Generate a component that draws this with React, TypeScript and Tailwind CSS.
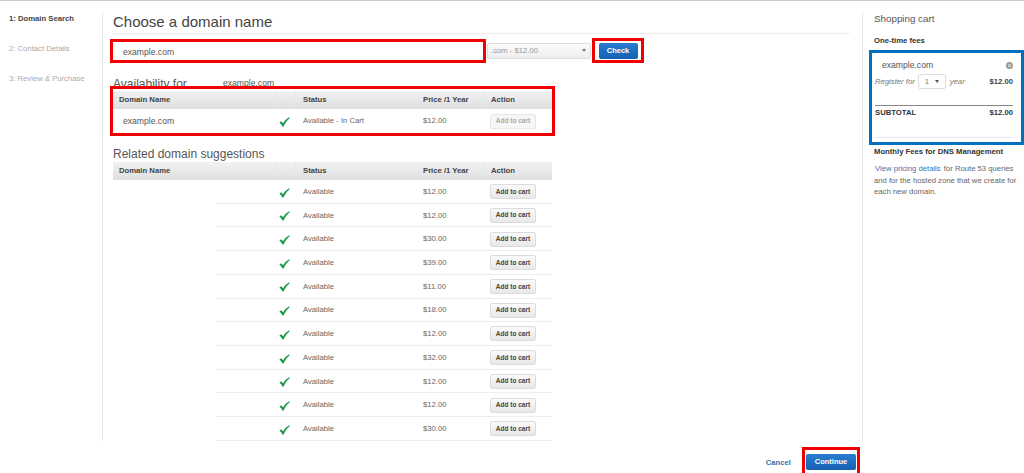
const rows = ["$12.00","$12.00","$30.00","$39.00","$11.00","$18.00","$12.00","$32.00","$12.00","$12.00","$30.00"];

function Check() {
  return (
    <svg width="11" height="10" viewBox="0 0 11 10" className="block">
      <path d="M0.4 5.6 L2.2 4.2 L4 6.2 C5.6 3.8 7.6 1.8 10.2 0.3 L10.8 1.1 C8.4 3.2 6.4 5.8 4.6 9.6 L3.4 9.6 C2.6 8 1.6 6.6 0.4 5.6 Z" fill="#1c9a4a" />
    </svg>
  );
}

function Head() {
  return (
    <div className="flex h-[18px] items-center bg-gradient-to-b from-[#f2f2f2] to-[#dfdfdf] pb-[1px] text-[7.7px] font-bold text-[#444]">
      <div className="w-[162px] pl-[6px]">Domain Name</div>
      <div className="h-full w-[21px] border-x border-[#e9e9e9]" />
      <div className="w-[121px] pl-[7px]">Status</div>
      <div className="flex h-full w-[68px] items-center border-r border-[#e9e9e9] pl-[6px]">Price /1 Year</div>
      <div className="pl-[6px]">Action</div>
    </div>
  );
}

function Row({ price, name, status, disabled, h }: { price: string; name?: string; status: string; disabled?: boolean; h: string }) {
  return (
    <div className={`flex items-center pt-[0.5px] text-[7.7px] text-[#666] ${h}`}>
      <div className="w-[162px] pl-[10px] text-[8.6px] text-[#555]">{name}</div>
      <div className="flex w-[21px] justify-center pr-[2px] pt-[2px]"><Check /></div>
      <div className="w-[121px] pl-[7px]">{status}</div>
      <div className="w-[68px] pl-[6px]">{price}</div>
      <button className={`ml-[5px] h-[15px] w-[46px] rounded-[2px] border text-[6.5px] font-bold ${disabled ? "border-[#e6e6e6] bg-[#f6f6f6] text-[#aaa]" : "border-[#dcdcdc] bg-gradient-to-b from-[#fafafa] to-[#e8e8e8] text-[#444]"}`}>Add to cart</button>
    </div>
  );
}

export default function App() {
  return (
    <div className="flex h-[473px] w-[1024px] flex-col overflow-hidden border-t border-[#ccc] bg-white font-['Liberation_Sans',Arial,sans-serif]">
      <div className="mt-[12px] flex h-[428px]">
        <aside className="flex w-[103px] flex-col gap-[18px] border-r border-[#e4e4e4] pl-[9px] text-[7.7px] leading-[12px] text-[#aaa]">
          <div className="font-bold text-[#444]">1: Domain Search</div>
          <div>2: Contact Details</div>
          <div>3: Review &amp; Purchase</div>
        </aside>

        <main className="w-[760px] border-r border-[#e4e4e4] pl-[10px]">
          <h1 className="mr-[12px] h-[21px] border-b border-[#eee] text-[15px] leading-[18px] text-[#444]">Choose a domain name</h1>
          <div className="-ml-[3px] mt-[4px] flex items-center">
            <div className="flex h-[24px] w-[376px] items-center border-[3px] border-[#f00000] pl-[10px] pt-[4px] text-[8.6px] text-[#555]">example.com</div>
            <div className="ml-[1px] flex h-[16px] w-[104px] items-center justify-between rounded-[2px] border border-[#ddd] bg-gradient-to-b from-[#fbfbfb] to-[#eee] pl-[3px] pr-[4px] text-[7.7px] text-[#999]">
              <span>.com - $12.00</span>
              <span className="h-0 w-0 border-x-[2.5px] border-t-[3px] border-x-transparent border-t-[#777]" />
            </div>
            <div className="ml-[1px] flex h-[25px] w-[52px] items-center justify-center border-[3px] border-[#f00000]">
              <button className="h-[16px] w-[39px] rounded-[2px] bg-gradient-to-b from-[#2a7cd0] to-[#1660b0] text-[7.5px] font-bold text-white">Check</button>
            </div>
          </div>

          <div className="mt-[13px] flex h-[10px] items-start pt-[2px] leading-none text-[#555]">
            <span className="w-[110px] text-[12px]">Availability for</span>
            <span className="mt-[1px] text-[8.6px]">example.com</span>
          </div>
          <div className="relative -ml-[3px] w-[445px] border-[3px] border-[#f00000] bg-white pt-[2px]">
            <Head />
            <Row name="example.com" status="Available - In Cart" price="$12.00" disabled h="h-[24px]" />
          </div>

          <h2 className="mt-[10px] h-[16px] text-[12px] leading-[16px] text-[#555]">Related domain suggestions</h2>
          <div className="w-[439px]">
            <Head />
            {rows.map((p, i) => (
              <div key={i} className="relative border-b border-[#eee]">
                <Row status="Available" price={p} h="h-[22.73px]" />
                <div className="absolute -bottom-px left-0 h-px w-[103px] bg-white" />
              </div>
            ))}
          </div>
        </main>

        <aside className="flex-1 pl-[6px] text-[7.7px] text-[#555]">
          <div className="pl-[5px] text-[9.8px] leading-[12px] text-[#555]">Shopping cart</div>
          <div className="mt-[11px] pl-[5px] font-bold leading-[10px] text-[#333]">One-time fees</div>
          <div className="mt-[4px] h-[95px] w-[155px] border-[3px] border-[#0070c0] pl-[3px] pr-[8px]">
            <div className="flex items-center justify-between pl-[7px] pt-[6px]">
              <span className="text-[8.6px] leading-[12px]">example.com</span>
              <span className="flex h-[7px] w-[7px] items-center justify-center rounded-full bg-[#999] text-[7px] leading-none text-white">×</span>
            </div>
            <div className="mt-[3px] flex items-center justify-between">
              <div className="flex items-center italic text-[#777]">
                <span>Register for</span>
                <span className="ml-[3px] flex h-[15px] w-[28px] items-center justify-between rounded-[2px] border border-[#ddd] px-[6px] not-italic">
                  <span>1</span>
                  <span className="h-0 w-0 border-x-[2px] border-t-[3px] border-x-transparent border-t-[#555]" />
                </span>
                <span className="ml-[4px]">year</span>
              </div>
              <span className="font-bold text-[#444]">$12.00</span>
            </div>
            <div className="mt-[16px] flex h-[13px] items-end justify-between border-t border-[#888] pt-[4px] font-bold leading-[10px] text-[#333]" >
              <span>SUBTOTAL</span>
              <span>$12.00</span>
            </div>
            <div className="mt-[19px] border-t border-[#e6e6e6]" />
          </div>
          <div className="mt-[2px] pl-[5px] font-bold leading-[10px] text-[#333]">Monthly Fees for DNS Management</div>
          <p className="mt-[6px] w-[148px] pl-[5px] leading-[11.5px] text-[#666]">
            <span className="ml-[1px] mr-[1px] text-[#3b76ad]">View pricing details</span> for Route 53 queries and for the hosted zone that we create for each new domain.
          </p>
        </aside>
      </div>

      <div className="flex flex-1 items-end justify-end pr-[164px]">
        <span className="mb-[4px] mr-[11px] text-[7.7px] font-bold text-[#3b6fa8]">Cancel</span>
        <div className="flex h-[26px] w-[58px] items-start justify-center border-[3px] border-b-0 border-[#f00000] pt-[4px]">
          <button className="h-[16px] w-[50px] rounded-[2px] bg-gradient-to-b from-[#2a7cd0] to-[#1660b0] text-[7.5px] font-bold text-white">Continue</button>
        </div>
      </div>
    </div>
  );
}
